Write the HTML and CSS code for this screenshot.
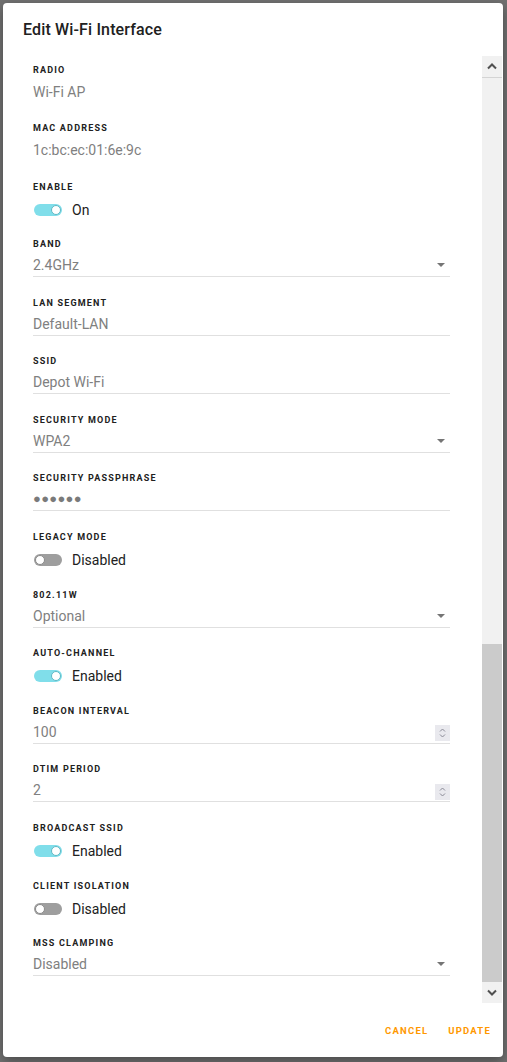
FILE: index.html
```html
<!DOCTYPE html>
<html lang="en">
<head>
  <meta charset="UTF-8">
  <meta name="viewport" content="width=device-width, initial-scale=1.0">
  <title>Edit Wi-Fi Interface</title>
  <link rel="stylesheet" href="styles.css">
</head>
<body>
  <div class="backdrop">
    <div class="dialog">
      <div class="dialog-title">Edit Wi-Fi Interface</div>
      <div class="dialog-body">
        <div class="content">
          <div class="field static-field">
            <div class="label">Radio</div>
            <div class="static">Wi-Fi AP</div>
          </div>
          <div class="field static-field">
            <div class="label">MAC Address</div>
            <div class="static">1c:bc:ec:01:6e:9c</div>
          </div>
          <div class="field toggle-field">
            <div class="label">Enable</div>
            <div class="toggle-row"><span class="toggle on"></span><span class="toggle-text">On</span></div>
          </div>
          <div class="field">
            <div class="label">Band</div>
            <div class="input"><span class="input-text">2.4GHz</span><span class="caret"></span></div>
          </div>
          <div class="field">
            <div class="label">LAN Segment</div>
            <div class="input"><span class="input-text">Default-LAN</span></div>
          </div>
          <div class="field">
            <div class="label">SSID</div>
            <div class="input"><span class="input-text">Depot Wi-Fi</span></div>
          </div>
          <div class="field">
            <div class="label">Security Mode</div>
            <div class="input"><span class="input-text">WPA2</span><span class="caret"></span></div>
          </div>
          <div class="field">
            <div class="label">Security Passphrase</div>
            <div class="input"><span class="input-text dots">&#9679;&#9679;&#9679;&#9679;&#9679;&#9679;</span></div>
          </div>
          <div class="field toggle-field">
            <div class="label">Legacy Mode</div>
            <div class="toggle-row"><span class="toggle"></span><span class="toggle-text">Disabled</span></div>
          </div>
          <div class="field">
            <div class="label">802.11w</div>
            <div class="input"><span class="input-text">Optional</span><span class="caret"></span></div>
          </div>
          <div class="field toggle-field">
            <div class="label">Auto-Channel</div>
            <div class="toggle-row"><span class="toggle on"></span><span class="toggle-text">Enabled</span></div>
          </div>
          <div class="field">
            <div class="label">Beacon Interval</div>
            <div class="input">
              <span class="input-text">100</span>
              <span class="spinner">
                <svg width="15" height="16" viewBox="0 0 15 16"><path d="M5 6.5 L7.5 4 L10 6.5 M5 9.5 L7.5 12 L10 9.5" fill="none" stroke="#8a8a96" stroke-width="1"/></svg>
              </span>
            </div>
          </div>
          <div class="field">
            <div class="label">DTIM Period</div>
            <div class="input">
              <span class="input-text">2</span>
              <span class="spinner">
                <svg width="15" height="16" viewBox="0 0 15 16"><path d="M5 6.5 L7.5 4 L10 6.5 M5 9.5 L7.5 12 L10 9.5" fill="none" stroke="#8a8a96" stroke-width="1"/></svg>
              </span>
            </div>
          </div>
          <div class="field toggle-field">
            <div class="label">Broadcast SSID</div>
            <div class="toggle-row"><span class="toggle on"></span><span class="toggle-text">Enabled</span></div>
          </div>
          <div class="field toggle-field">
            <div class="label">Client Isolation</div>
            <div class="toggle-row"><span class="toggle"></span><span class="toggle-text">Disabled</span></div>
          </div>
          <div class="field">
            <div class="label">MSS Clamping</div>
            <div class="input"><span class="input-text">Disabled</span><span class="caret"></span></div>
          </div>
        </div>
        <!-- scrollbar drawn by hand so the thumb sits where it does in the app -->
        <div class="scrollbar">
          <div class="sb-btn sb-up">
            <svg width="20" height="21" viewBox="0 0 20 21"><path d="M6 12.5 L10 8.5 L14 12.5" fill="none" stroke="#505050" stroke-width="2"/></svg>
          </div>
          <div class="sb-track"><div class="sb-thumb"></div></div>
          <div class="sb-btn">
            <svg width="20" height="21" viewBox="0 0 20 21"><path d="M6 8.5 L10 12.5 L14 8.5" fill="none" stroke="#505050" stroke-width="2"/></svg>
          </div>
        </div>
      </div>
      <div class="dialog-actions">
        <button class="action-btn">Cancel</button>
        <button class="action-btn">Update</button>
      </div>
    </div>
  </div>
</body>
</html>
```

FILE: styles.css
```css
body {
  margin: 0;
  font-family: Roboto, "Liberation Sans", sans-serif;
  background: #717171;
}
.backdrop {
  height: 1062px;
  padding: 3px;
  box-sizing: border-box;
}
.dialog {
  width: 500px;
  height: 1054px;
  background: #fff;
  border-radius: 4px;
  box-shadow: 0 4px 12px rgba(0, 0, 0, 0.35);
  display: flex;
  flex-direction: column;
}
.dialog-title {
  height: 53px;
  padding: 18px 0 0 20px;
  box-sizing: border-box;
  font-size: 16px;
  line-height: 18px;
  font-weight: 500;
  letter-spacing: 0.15px;
  color: #212121;
}
.dialog-body {
  flex: 1;
  display: flex;
  min-height: 0;
}
.content {
  flex: 1;
  padding: 8px 32px 0 30px;
  overflow: hidden;
}
.field {
  height: 58.5px;
}
.static-field {
  height: 58.4px;
}
.toggle-field {
  height: 57.7px;
}
.label {
  font-size: 9px;
  line-height: 12px;
  font-weight: 700;
  letter-spacing: 1.2px;
  text-transform: uppercase;
  color: #212121;
}
.static {
  margin-top: 6px;
  font-size: 14px;
  line-height: 20px;
  color: #808080;
}
.input {
  margin-top: 4px;
  height: 22px;
  border-bottom: 1px solid #e0e0e0;
  display: flex;
  align-items: center;
}
.input-text {
  flex: 1;
  font-size: 14px;
  line-height: 20px;
  color: #808080;
}
.dots {
  font-size: 13px;
  letter-spacing: 0.3px;
  color: #7a7a7a;
}
.caret {
  width: 0;
  height: 0;
  border-left: 4.5px solid transparent;
  border-right: 4.5px solid transparent;
  border-top: 4.5px solid #757575;
  margin-right: 5px;
}
.spinner {
  width: 15px;
  height: 16px;
  background: #e9e9ee;
  display: flex;
  margin-top: 3px;
}
.toggle-row {
  margin-top: 6px;
  height: 22px;
  display: flex;
  align-items: center;
}
.toggle {
  width: 28px;
  height: 12px;
  border-radius: 6px;
  background: #9e9e9e;
  margin-left: 1px;
  position: relative;
}
.toggle::after {
  content: "";
  position: absolute;
  top: 1px;
  left: 1px;
  width: 10px;
  height: 10px;
  border-radius: 50%;
  background: #fff;
  box-sizing: border-box;
  border: 1px solid #8a8a8a;
}
.toggle.on {
  background: #80deea;
}
.toggle.on::after {
  left: auto;
  right: 1px;
  border-color: #5fb8c4;
}
.toggle-text {
  margin-left: 10px;
  font-size: 14px;
  color: #212121;
}
.scrollbar {
  width: 20px;
  margin-right: 1px;
  display: flex;
  flex-direction: column;
  background: #f1f1f1;
}
.sb-btn {
  height: 21px;
  display: flex;
}
.sb-up {
  border-bottom: 1px solid #d4d4d4;
}
.sb-track {
  flex: 1;
  display: flex;
  flex-direction: column;
  justify-content: flex-end;
}
.sb-thumb {
  height: 338px;
  background: #cbcbcb;
}
.dialog-actions {
  height: 54px;
  display: flex;
  justify-content: flex-end;
  align-items: center;
  gap: 4px;
  padding-right: 4px;
}
.action-btn {
  border: none;
  background: none;
  padding: 4px 8px;
  font-family: Roboto, "Liberation Sans", sans-serif;
  font-size: 9.5px;
  font-weight: 700;
  letter-spacing: 1.2px;
  text-transform: uppercase;
  color: #ff9800;
}
```
